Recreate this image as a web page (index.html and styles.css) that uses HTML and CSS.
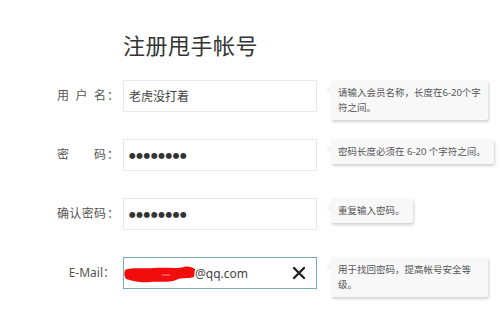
FILE: index.html
```html
<!DOCTYPE html>
<html lang="zh-CN">
<head>
  <meta charset="UTF-8" />
  <title>注册甩手帐号</title>
  <link rel="stylesheet" href="styles.css">
</head>
<body>
  <div class="page">
    <h1 class="title">注册甩手帐号</h1>

    <!-- 用户名 -->
    <div class="row">
      <label class="label"><span class="label-text">用户名</span>：</label>
      <div class="field">老虎没打着</div>
      <div class="tip tip-wide">请输入会员名称，长度在6-20个字<br>符之间。</div>
    </div>

    <!-- 密码 -->
    <div class="row">
      <label class="label"><span class="label-text">密码</span>：</label>
      <div class="field field-dots">●●●●●●●●</div>
      <div class="tip">密码长度必须在 6-20 个字符之间。</div>
    </div>

    <!-- 确认密码 -->
    <div class="row">
      <label class="label"><span class="label-text">确认密码</span>：</label>
      <div class="field field-dots">●●●●●●●●</div>
      <div class="tip">重复输入密码。</div>
    </div>

    <!-- 邮箱 -->
    <div class="row">
      <label class="label label-plain">E-Mail：</label>
      <div class="field field-active">
        <svg class="redact" width="71" height="18" viewBox="0 0 71 18">
          <path d="M1 4 C8 1 20 3 30 2 C42 1 52 3 60 1 C64 0 68 1 71 3 L70 11 C64 13 58 11 52 14 C44 17 34 15 26 16 C18 17 8 15 2 13 C0 10 0 7 1 4 Z" fill="#f20d0d"/>
          <path d="M38 9 L46 9" stroke="#ff8f8f" stroke-width="1"/>
        </svg>
        <span>@qq.com</span>
        <svg class="clear" width="14" height="14" viewBox="0 0 14 14">
          <path d="M2 2 L12 12 M12 2 L2 12" stroke="#222" stroke-width="2.4" stroke-linecap="round"/>
        </svg>
      </div>
      <div class="tip tip-wide">用于找回密码，提高帐号安全等<br>级。</div>
    </div>
  </div>
</body>
</html>
```

FILE: styles.css
```css
body {
  margin: 0;
  background-color: #fff;
  font-family: "Noto Sans", "Noto Sans CJK SC", sans-serif;
  color: #555;
}

.page {
  padding: 30px 0 0 57px;
}

.title {
  margin: 0 0 20px 66px;
  font-size: 22px;
  font-weight: 400;
  line-height: 30px;
  color: #333;
  letter-spacing: 0.5px;
}

.row {
  display: flex;
  align-items: flex-start;
  height: 32px;
  margin-bottom: 27px;
}

.label {
  display: flex;
  justify-content: flex-end;
  width: 62px;
  margin-right: 4px;
  font-size: 12px;
  line-height: 32px;
  color: #555;
}

.label-text {
  width: 49px;
  text-align: justify;
  text-align-last: justify;
  margin-right: 1px;
}

.label-plain {
  margin-right: 0;
  width: 66px;
  padding-right: 8px;
  box-sizing: border-box;
}

.field {
  display: flex;
  align-items: center;
  box-sizing: border-box;
  width: 194px;
  height: 32px;
  padding: 0 10px 0 5px;
  border: 1px solid #e8e8e8;
  font-size: 12px;
  color: #444;
}

.field-dots {
  font-size: 6.5px;
  letter-spacing: 0.8px;
  color: #333;
}

.field-active {
  border-color: #78aeb2;
  padding-left: 0;
}

.redact {
  margin-top: 3px;
}

.clear {
  margin-left: auto;
}

.tip {
  position: relative;
  box-sizing: border-box;
  margin-left: 14px;
  padding: 5px 8px 5px 7px;
  font-size: 9.5px;
  line-height: 15px;
  white-space: nowrap;
  color: #555;
  background-color: #f8f8f8;
  border-radius: 2px;
  box-shadow: 1px 2px 3px rgba(0, 0, 0, 0.18);
}

.tip::before {
  content: "";
  position: absolute;
  left: -5px;
  top: 6px;
  border-top: 4px solid transparent;
  border-bottom: 4px solid transparent;
  border-right: 5px solid #f3f3f3;
}

.tip-wide {
  width: 157px;
}
```
